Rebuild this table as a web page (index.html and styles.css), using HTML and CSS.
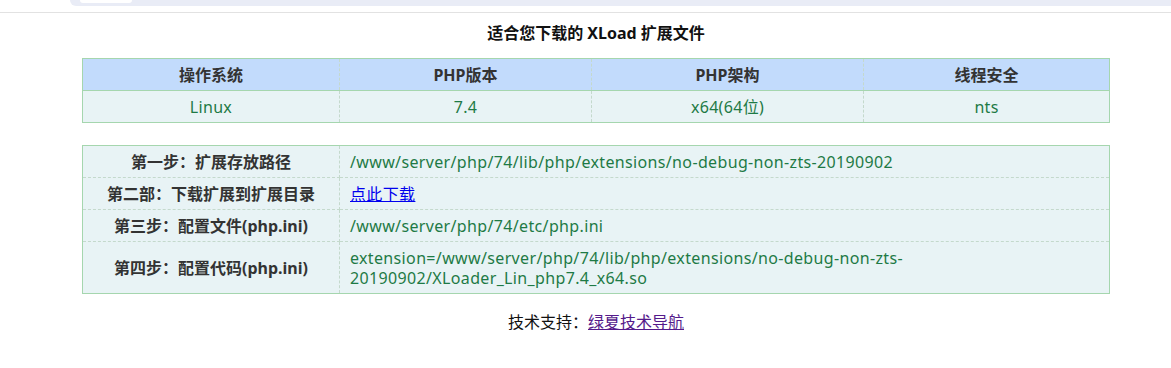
FILE: index.html
```html
<!DOCTYPE html>
<html lang="zh-CN">
<head>
<meta charset="utf-8">
<title>XLoad</title>
<link rel="stylesheet" href="styles.css">
</head>
<body>
<div class="topbar">
  <div class="band"><div class="band-inner"></div></div>
</div>
<div class="rule"></div>
<main class="main">
  <h3 class="title">适合您下载的 XLoad 扩展文件</h3>
  <table class="tbl env">
    <thead>
      <tr><th class="c1">操作系统</th><th class="c2">PHP版本</th><th class="c3">PHP架构</th><th class="c4">线程安全</th></tr>
    </thead>
    <tbody>
      <tr><td>Linux</td><td>7.4</td><td>x64(64位)</td><td>nts</td></tr>
    </tbody>
  </table>
  <table class="tbl steps">
    <tbody>
      <tr><th class="c1">第一步：扩展存放路径</th><td>/www/server/php/74/lib/php/extensions/no-debug-non-zts-20190902</td></tr>
      <tr><th>第二部：下载扩展到扩展目录</th><td><a href="#dl" class="dl">点此下载</a></td></tr>
      <tr><th>第三步：配置文件(php.ini)</th><td>/www/server/php/74/etc/php.ini</td></tr>
      <tr><th>第四步：配置代码(php.ini)</th><td class="code">extension=/www/server/php/74/lib/php/extensions/no-debug-non-zts-20190902/XLoader_Lin_php7.4_x64.so</td></tr>
    </tbody>
  </table>
  <p class="footer">技术支持：<a href="#nav" class="visited">绿夏技术导航</a></p>
</main>
</body>
</html>
```
FILE: styles.css
```css
html, body {
  margin: 0;
  padding: 0;
  background: #fff;
  font-family: "Noto Sans", "Noto Sans CJK SC", sans-serif;
  font-size: 16px;
  color: #333;
}
.topbar {
  height: 12px;
}
.band {
  margin-left: 70px;
  height: 6px;
  background: #e9ecf6;
  border-bottom-left-radius: 10px;
  position: relative;
}
.band-inner {
  position: absolute;
  left: 10px;
  top: 0;
  width: 52px;
  height: 3px;
  background: #fff;
  border-radius: 0 0 6px 6px;
}
.rule {
  height: 1px;
  background: #e2e2e2;
}
.main {
  width: 1028px;
  margin-left: 82px;
}
.title {
  margin: 0;
  height: 37px;
  padding-bottom: 8px;
  display: flex;
  align-items: center;
  justify-content: center;
  font-size: 16px;
  font-weight: bold;
  color: #111;
}
.tbl {
  width: 100%;
  border-collapse: collapse;
  border: 1px solid #a5d6ae;
  background: #e8f3f5;
  line-height: 20px;
}
.tbl th, .tbl td {
  border: 1px dashed #c4d9cc;
  padding: 6px 10px 5px;
}
.tbl tr:first-child th, .tbl tr:first-child td { border-top: 1px solid #a5d6ae; }
.env thead th {
  background: #c2dbfc;
  font-weight: bold;
  color: #333;
  text-align: center;
}
.env td {
  text-align: center;
  color: #1e7a45;
  letter-spacing: 0.3px;
}
.env .c1 { width: 236px; }
.env .c2 { width: 231px; }
.env .c3 { width: 251px; }
.steps {
  margin-top: 22px;
}
.steps th {
  width: 236px;
  text-align: center;
  font-weight: bold;
  color: #333;
}
.steps td {
  text-align: left;
  color: #1e7a45;
  letter-spacing: 0.35px;
}
.dl { color: #0000ee; }
.footer {
  margin: 15px 0 0;
  text-align: center;
  color: #111;
}
.visited { color: #551a8b; }
```
